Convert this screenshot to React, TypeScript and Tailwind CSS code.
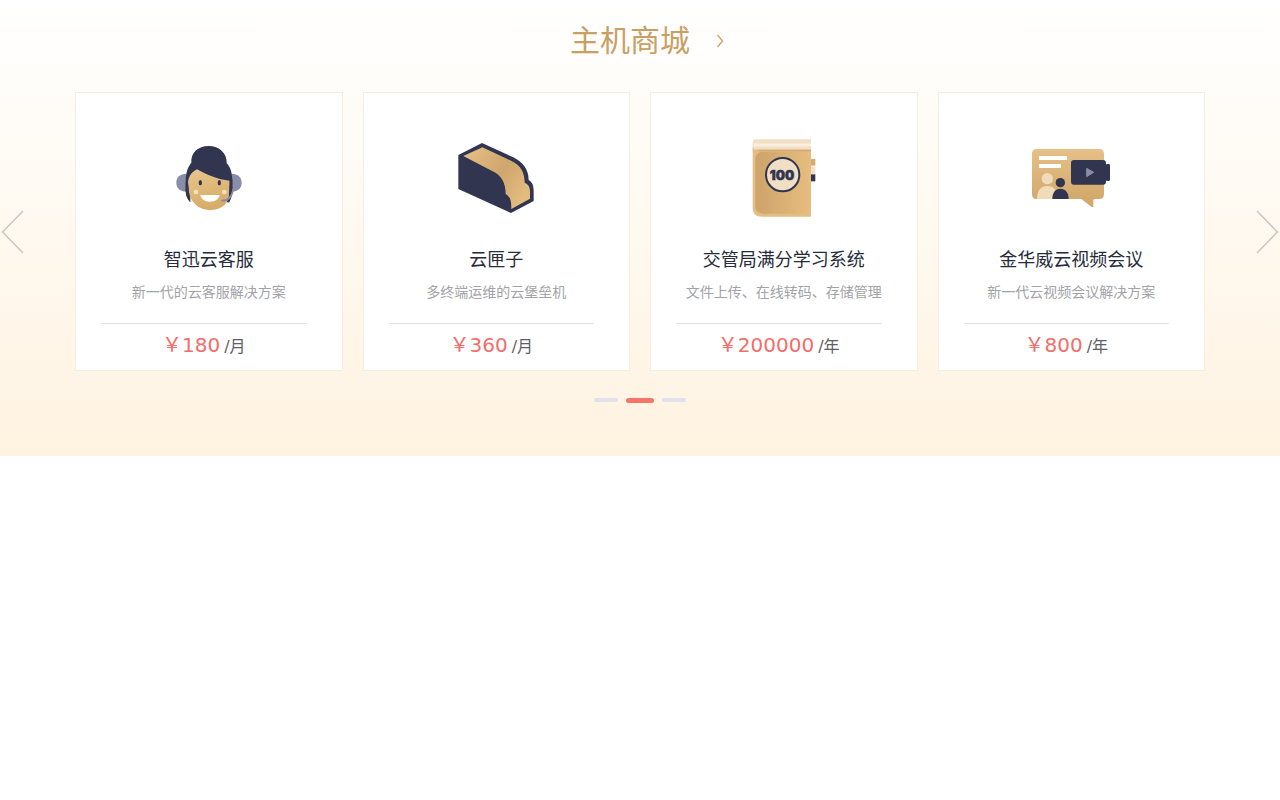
import { useState } from 'react';

const AgentIcon = () => (
  <svg viewBox="-3 0 270 270" className="h-[90px] w-[90px]" aria-hidden="true">
    <defs>
      <linearGradient id="face" x1="0" y1="0" x2="0.3" y2="1">
        <stop offset="0" stopColor="#e9c78f" />
        <stop offset="1" stopColor="#d6ac68" />
      </linearGradient>
    </defs>
    <path d="M64 116c-19 0-30 11-30 27s11 27 30 27zM200 116c19 0 30 11 30 27s-11 27-30 27z" fill="#8a8da8" />
    <path d="M62 140c0-24 5-42 17-57-2-30 20-50 52-50s56 22 54 52c12 12 17 30 17 55v26c0 14-5 26-12 37l-5-3V150L76 140v62c-9-9-14-22-14-36z" fill="#31354f" />
    <path d="M69 142c2-18 12-32 27-39 30 16 62 31 98 34v30c0 38-23 58-58 58s-65-25-65-66c0-6-2-11-2-17z" fill="url(#face)" />
    <path d="M62 142h7c1 22 1 42 7 60-9-9-14-22-14-36zM194 132h8v34c0 14-4 27-10 37-2-12 2-42 2-71z" fill="#31354f" />
    <ellipse cx="106" cy="143" rx="5" ry="8" fill="#31354f" />
    <ellipse cx="163" cy="143" rx="5" ry="8" fill="#31354f" />
    <circle cx="93" cy="171" r="7" fill="#f9e0bb" />
    <circle cx="178" cy="171" r="7" fill="#f9e0bb" />
    <path d="M106 180h58c-3 13-14 20-29 20s-26-7-29-20z" fill="#fff" />
    <path d="M205 162c-4 24-16 36-37 35" fill="none" stroke="#8a8da8" strokeWidth="5" />
  </svg>
);

const BoxIcon = () => (
  <svg viewBox="3 0 270 270" className="h-[90px] w-[90px]" aria-hidden="true">
    <defs>
      <linearGradient id="inside" x1="0" y1="0" x2="1" y2="0.6">
        <stop offset="0" stopColor="#e6c188" />
        <stop offset="0.6" stopColor="#cfa66d" />
        <stop offset="1" stopColor="#e2bb7e" />
      </linearGradient>
    </defs>
    <path d="M25 60L96 24l94 43c28 14 46 36 46 68 12 7 15 18 15 34v29l-68 36L25 162z" fill="#31354f" />
    <path d="M40 63l57-26 88 41c25 12 39 32 39 65 12 6 16 13 16 28v20l-56 31c0-25-3-36-17-45 0-34-13-58-42-70z" fill="url(#inside)" />
  </svg>
);

const BookIcon = () => (
  <svg viewBox="-3 15 270 270" className="h-[90px] w-[90px]" aria-hidden="true">
    <defs>
      <linearGradient id="cover" x1="0" y1="0" x2="1" y2="0">
        <stop offset="0" stopColor="#cda36b" />
        <stop offset="1" stopColor="#e6bd7e" />
      </linearGradient>
    </defs>
    <path d="M211 87h15v20h-15z" fill="#d5ab70" />
    <path d="M211 110h15v22h-15z" fill="#f3dfc1" />
    <path d="M211 133h15v21h-15z" fill="#31354f" />
    <path d="M38 37c0-6 4-9 10-9h165v38H38z" fill="#f2dfc5" />
    <path d="M42 45h171" stroke="#faf0e2" strokeWidth="9" />
    <path d="M38 50c0 6 4 9 12 9h163v201H66c-18 0-28-10-28-27z" fill="#e3bd84" />
    <path d="M46 90c0-16 9-25 25-25h138v186H71c-14 0-25-8-25-22z" fill="url(#cover)" />
    <path d="M50 59h163v5H60z" fill="#d2a86e" />
    <circle cx="128" cy="134" r="50" fill="#f0dec5" stroke="#31354f" strokeWidth="6" />
    <text x="126" y="149" textAnchor="middle" fontFamily="Inter, sans-serif" fontWeight="900" fontSize="39" fill="#31354f" stroke="#31354f" strokeWidth="1.5">100</text>
  </svg>
);

const MeetingIcon = () => (
  <svg viewBox="3 0 270 270" className="h-[90px] w-[90px]" aria-hidden="true">
    <defs>
      <linearGradient id="board" x1="0" y1="0" x2="0" y2="1">
        <stop offset="0" stopColor="#e5c087" />
        <stop offset="1" stopColor="#d0a669" />
      </linearGradient>
    </defs>
    <path d="M35 42h188c9 0 14 5 14 14v121c0 10-5 15-14 15h-12c-4 0-6 2-6 6v18h-5l-28-22c-2-2-4-2-7-2H35c-9 0-14-5-14-15V56c0-9 5-14 14-14z" fill="url(#board)" />
    <path d="M42 63h84v12H42zM42 87h66v12H42z" fill="#fff" />
    <circle cx="67" cy="131" r="17" fill="#f0dbbb" />
    <path d="M36 192c0-25 11-39 31-39s31 14 31 39z" fill="#f0dbbb" />
    <circle cx="106" cy="143" r="14" fill="#31354f" />
    <path d="M82 192c0-20 9-31 24-31s25 11 25 31z" fill="#31354f" />
    <path d="M147 75h87c6 0 9 3 9 9v5c2-2 4-2 8-2 3 0 4 2 4 5v41c0 3-1 5-4 5-4 0-6 0-8-2v4c0 6-3 9-9 9h-87c-6 0-9-3-9-9V84c0-6 3-9 9-9z" fill="#31354f" />
    <path d="M185 100l21 12-21 13z" fill="#8a8da8" stroke="#8a8da8" strokeWidth="3" strokeLinejoin="round" />
  </svg>
);

const products = [
  { name: '智迅云客服', desc: '新一代的云客服解决方案', price: '180', unit: '月', Icon: AgentIcon },
  { name: '云匣子', desc: '多终端运维的云堡垒机', price: '360', unit: '月', Icon: BoxIcon },
  { name: '交管局满分学习系统', desc: '文件上传、在线转码、存储管理', price: '200000', unit: '年', Icon: BookIcon },
  { name: '金华威云视频会议', desc: '新一代云视频会议解决方案', price: '800', unit: '年', Icon: MeetingIcon },
];

const App = () => {
  const [page, setPage] = useState(1);

  const move = (step: number) => setPage((page + step + 3) % 3);

  return (
    <section className="bg-linear-to-b from-white to-[#fff3e1] pt-[21px] pb-[53px] font-['DejaVu_Sans','Noto_Sans_CJK_SC',sans-serif]">
      <h2 className="flex justify-center text-3xl leading-10 text-[#c8a063]">
        <a href="#mall" className="flex items-center gap-[26px] pl-3.5">
          主机商城
          <svg viewBox="0 0 8 14" className="h-[14px] w-2" fill="none" stroke="currentColor" strokeWidth="1.2" aria-hidden="true">
            <path d="M1.5 1L6.5 7L1.5 13" />
          </svg>
        </a>
      </h2>

      <div className="mt-[31px] flex items-center justify-between">
        <button onClick={() => move(-1)} aria-label="上一页" className="shrink-0 cursor-pointer text-[#c9c7c4]">
          <svg viewBox="0 0 24 44" className="h-11 w-6" fill="none" stroke="currentColor" strokeWidth="1.5">
            <path d="M23 1L2.5 22L23 43" />
          </svg>
        </button>

        <div className="grid w-full max-w-[1130px] grid-cols-4 gap-5">
          {products.map(({ name, desc, price, unit, Icon }) => (
            <a key={name} href="#product" className="flex flex-col items-center border border-[#f5ede0] bg-white pt-[42px]">
              <Icon />
              <h3 className="mt-[21px] text-lg leading-7 text-[#252b3a]">{name}</h3>
              <p className="mt-1.5 text-sm leading-6 text-[#a2a3a7]">{desc}</p>
              <div className="mt-[19px] mr-[35px] ml-[25px] self-stretch border-t border-[#e4e4e6] pt-1.5 pb-1.5 text-center leading-[34px]">
                <span className="text-xl text-[#f36d6a]">￥{price}</span>
                <span className="ml-1 text-base text-[#5e6066]">/{unit}</span>
              </div>
            </a>
          ))}
        </div>

        <button onClick={() => move(1)} aria-label="下一页" className="shrink-0 cursor-pointer text-[#c9c7c4]">
          <svg viewBox="0 0 24 44" className="h-11 w-6" fill="none" stroke="currentColor" strokeWidth="1.5">
            <path d="M1 1L21.5 22L1 43" />
          </svg>
        </button>
      </div>

      <div className="mt-[26px] flex h-[6px] items-center justify-center gap-2">
        {[0, 1, 2].map((i) => (
          <button
            key={i}
            onClick={() => setPage(i)}
            aria-label={`第${i + 1}页`}
            className={i === page ? 'h-[5px] w-7 rounded-full bg-[#f9736a]' : 'h-1 w-6 rounded-full bg-[#e0e0ee]'}
          />
        ))}
      </div>
    </section>
  );
};

export default App;
